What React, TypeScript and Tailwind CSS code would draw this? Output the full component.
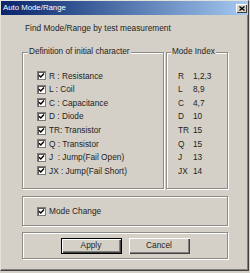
import React from "react";

const Check = () => (
  <span className="w-[9px] h-[9px] bg-white border border-[#7c7b78] shadow-[inset_1px_1px_0_#5a5955] flex items-center justify-center shrink-0">
    <svg width="7" height="7" viewBox="0 0 7 7">
      <path d="M1 3.2 L2.8 5 L6 1.6" stroke="#000" strokeWidth="1.4" fill="none" />
    </svg>
  </span>
);

const GroupBox = ({
  label,
  className,
  children,
  labelLeft,
}: {
  label?: string;
  className: string;
  children?: React.ReactNode;
  labelLeft?: string;
}) => (
  <div
    className={`relative border border-[#8e8c87] shadow-[1px_1px_0_#ffffff,inset_1px_1px_0_#ffffff] ${className}`}
  >
    {label && (
      <span
        className={`absolute top-[-6px] ${labelLeft} bg-[#d4d0c8] px-[1px] text-[8.2px] leading-[10px] whitespace-nowrap`}
      >
        {label}
      </span>
    )}
    {children}
  </div>
);

const defs = [
  "R : Resistance",
  "L : Coil",
  "C : Capacitance",
  "D : Diode",
  "TR: Transistor",
  "Q : Transistor",
  "J  : Jump(Fail Open)",
  "JX : Jump(Fail Short)",
];

const idx: [string, string][] = [
  ["R", "1,2,3"],
  ["L", "8,9"],
  ["C", "4,7"],
  ["D", "10"],
  ["TR", "15"],
  ["Q", "15"],
  ["J", "13"],
  ["JX", "14"],
];

export default function App() {
  return (
    <div className="w-[250px] h-[273px] bg-[#d4d0c8]">
      <div className="w-[249px] h-[271px] bg-[#d4d0c8] flex flex-col border border-t-[#e4e2dc] border-l-[#e4e2dc] border-r-[#404040] border-b-[#404040] shadow-[inset_-1px_-1px_0_#808080] font-['Liberation_Sans',Arial,sans-serif] text-[#1e1e1e]">
        <div className="h-[14px] bg-linear-to-r from-[#0a246a] to-[#a6caf0] flex items-center justify-between pl-[2px] pr-[1px]">
          <span className="text-white text-[7.8px] leading-none">Auto Mode/Range</span>
          <span className="w-[11px] h-[9px] bg-[#d4d0c8] shadow-[inset_1px_1px_0_#fff,inset_-1px_-1px_0_#404040] flex items-center justify-center">
            <svg width="6" height="5" viewBox="0 0 6 5">
              <path d="M0.5 0.5 L5.5 4.5 M5.5 0.5 L0.5 4.5" stroke="#000" strokeWidth="1.3" />
            </svg>
          </span>
        </div>

        <div className="flex flex-col pl-[21px] w-[227px]">
          <div className="mt-[8px] pl-[3px] text-[8.3px] leading-[11px] whitespace-nowrap">
            Find Mode/Range by test measurement
          </div>

          <div className="mt-[18px] flex gap-[2px] h-[137px]">
            <GroupBox label="Definition of initial character" labelLeft="left-[5px]" className="w-[142px] h-full">
              <div className="flex flex-col pt-[16px] pl-[14px]">
                {defs.map((d) => (
                  <div key={d} className="h-[13.6px] flex items-center gap-[3px]">
                    <Check />
                    <span className="text-[8.3px] leading-none whitespace-pre">{d}</span>
                  </div>
                ))}
              </div>
            </GroupBox>
            <GroupBox label="Mode Index" labelLeft="left-[4px]" className="w-[62px] h-full">
              <div className="grid grid-cols-[15px_auto] pt-[16px] pl-[11px] text-[8.3px] leading-none">
                {idx.map(([k, v]) => (
                  <React.Fragment key={k}>
                    <span className="h-[13.6px] flex items-center">{k}</span>
                    <span className="h-[13.6px] flex items-center">{v}</span>
                  </React.Fragment>
                ))}
              </div>
            </GroupBox>
          </div>

          <GroupBox className="mt-[7px] h-[30px] w-[206px] flex items-center pl-[14px]">
            <div className="flex items-center gap-[3px]">
              <Check />
              <span className="text-[8.3px] leading-none">Mode Change</span>
            </div>
          </GroupBox>

          <GroupBox className="mt-[6px] h-[27px] w-[206px] flex items-center justify-center gap-[7px]">
            <button className="w-[61px] h-[16px] border border-black bg-[#d4d0c8] shadow-[inset_1px_1px_0_#fff,inset_-1px_-1px_0_#404040,inset_-2px_-2px_0_#808080] text-[8.3px] leading-none flex items-center justify-center">
              Apply
            </button>
            <button className="w-[61px] h-[16px] bg-[#d4d0c8] shadow-[inset_1px_1px_0_#fff,inset_-1px_-1px_0_#404040,inset_-2px_-2px_0_#808080] text-[8.3px] leading-none flex items-center justify-center">
              Cancel
            </button>
          </GroupBox>
        </div>
      </div>
    </div>
  );
}
